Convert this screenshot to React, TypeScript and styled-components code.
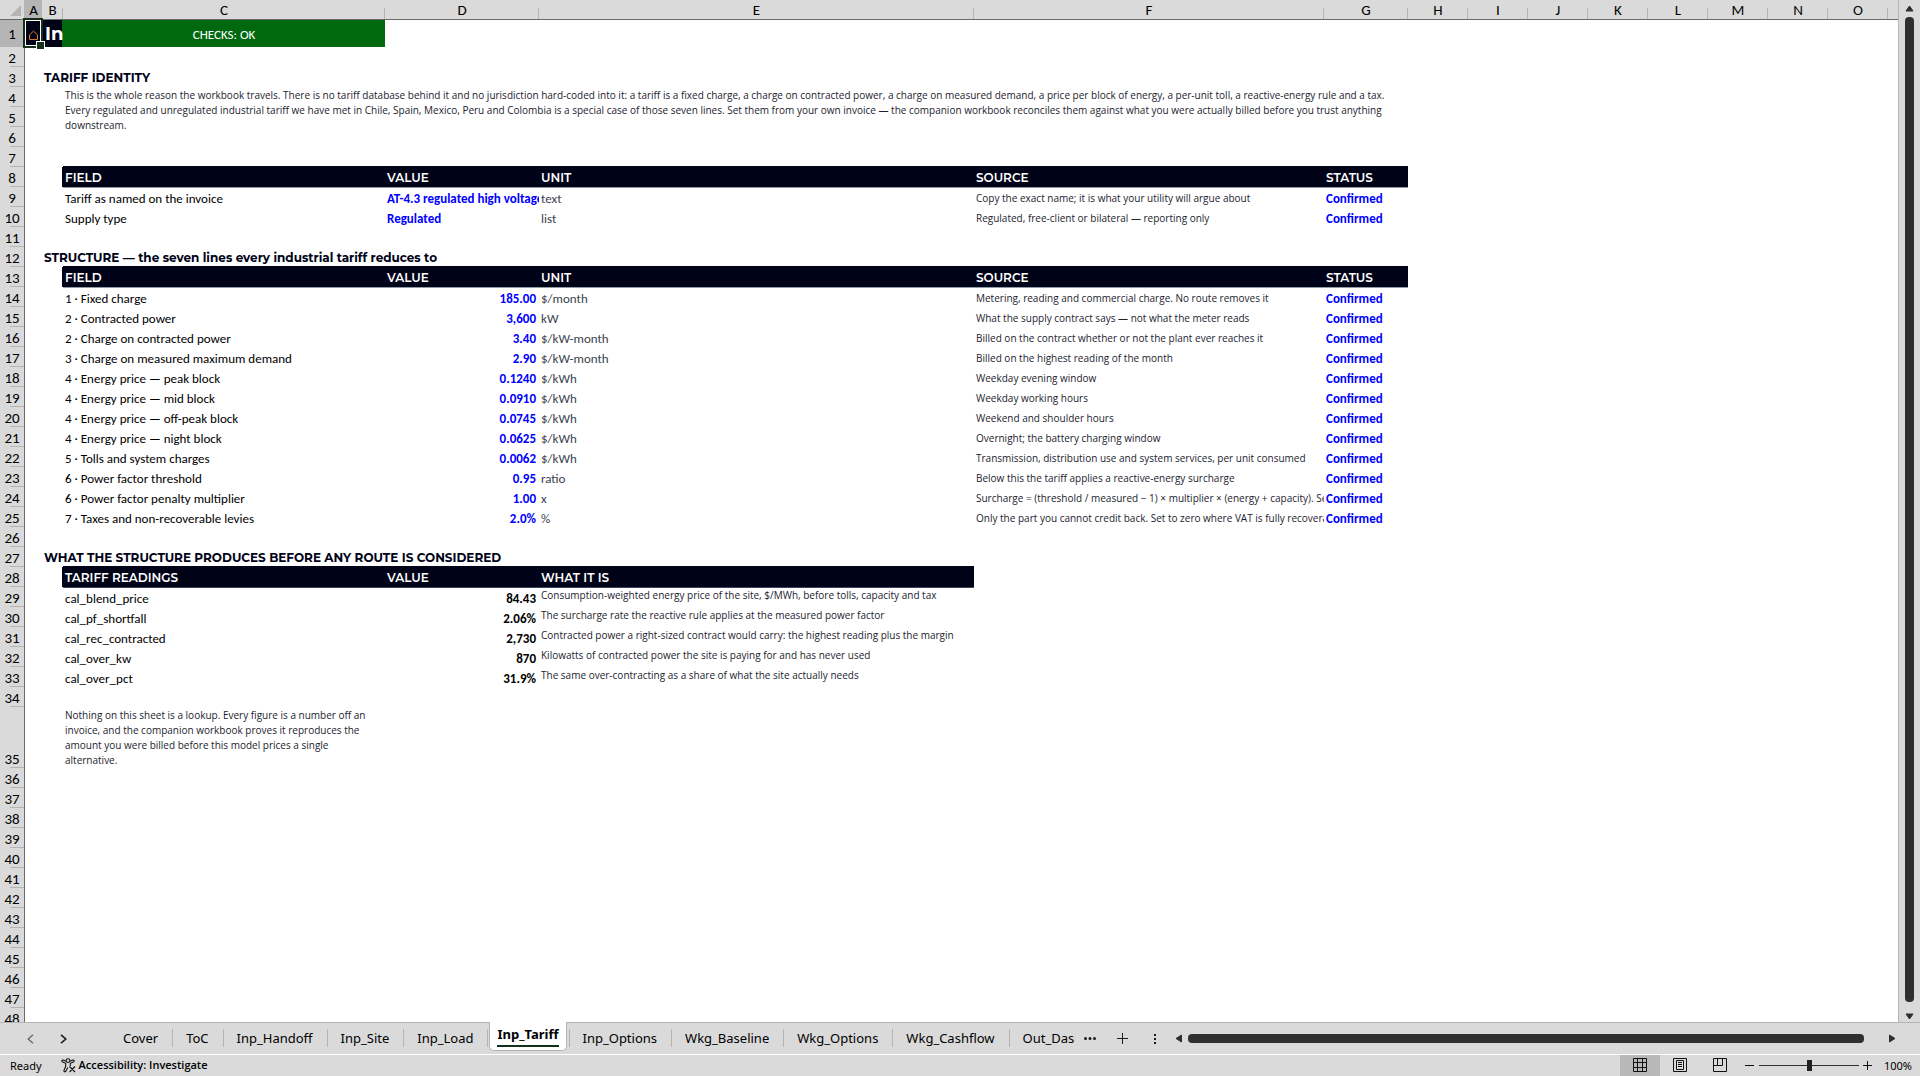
import React from "react";
import styled, { createGlobalStyle, css } from "styled-components";

const body = `Carlito, Calibri, Lato, sans-serif`;
const display = `Montserrat, Lato, sans-serif`;
const ui = `"Noto Sans", "Open Sans", sans-serif`;

const color = {
  chrome: "#dadada",
  chromeActive: "#b5b5b5",
  line: "#6b6b6b",
  tick: "#b4b4b4",
  navy: "#000217",
  green: "#00690f",
  input: "#0000ff",
  note: "#1c232e",
  ink: "#2f2f2f",
};

const GlobalStyle = createGlobalStyle`
  * { box-sizing: border-box; }
  body { margin: 0; background: ${color.chrome}; color: #000; font-family: ${body}; }
  button, input { font: inherit; color: inherit; border: 0; padding: 0; margin: 0; background: none; }
`;

const Workbook = styled.div`
  display: flex;
  flex-direction: column;
  height: 100vh;
  overflow: hidden;
`;

const Main = styled.main`
  display: flex;
  flex: 1;
  min-height: 0;
`;

const Sheet = styled.div`
  flex: 1;
  min-width: 0;
  overflow: hidden;
  background: #fff;
  border-right: 1px solid ${color.tick};
`;

const Grid = styled.table`
  width: 100%;
  table-layout: fixed;
  border-collapse: separate;
  border-spacing: 0;
`;

const Column = styled.col<{ $width?: number }>`
  ${(p) => p.$width && `width: ${p.$width}px;`}
`;

const ColumnHead = styled.th<{ $active?: boolean; $last?: boolean }>`
  height: 20px;
  padding: 2px 0 0;
  font-size: 15px;
  line-height: 17px;
  font-weight: 400;
  border-bottom: 1px solid ${color.line};
  background-color: ${(p) => (p.$active ? color.chromeActive : color.chrome)};
  ${(p) =>
    !p.$last &&
    css`
      background-image: linear-gradient(${color.tick}, ${color.tick});
      background-size: 1px 11px;
      background-position: right bottom;
      background-repeat: no-repeat;
    `}
`;

const Corner = styled.td`
  height: 20px;
  padding: 5px 3px 0 0;
  line-height: 0;
  text-align: right;
  vertical-align: top;
  background: ${color.chrome};
  border-right: 1px solid ${color.tick};
  border-bottom: 1px solid ${color.line};
`;

const Row = styled.tr<{ $height: number }>`
  height: ${(p) => p.$height}px;
`;

const RowHead = styled.th<{ $active?: boolean }>`
  padding: 0;
  font-size: 15px;
  line-height: 18px;
  font-weight: 400;
  text-align: center;
  vertical-align: ${(p) => (p.$active ? "middle" : "bottom")};
  border-right: 1px solid ${color.line};
  background-color: ${(p) => (p.$active ? color.chromeActive : color.chrome)};
  background-image: linear-gradient(${color.tick}, ${color.tick});
  background-size: 14px 1px;
  background-position: right bottom;
  background-repeat: no-repeat;
`;

type Kind = "unit" | "note" | "input" | "result" | "readLabel" | "readNote";

const kinds: Record<Kind, ReturnType<typeof css>> = {
  unit: css`
    color: #3b434d;
  `,
  note: css`
    font-family: "Open Sans", sans-serif;
    font-size: 10px;
    color: ${color.note};
  `,
  input: css`
    font-weight: 700;
    color: ${color.input};
  `,
  result: css`
    font-weight: 700;
    line-height: 16px;
  `,
  readLabel: css`
    line-height: 16px;
  `,
  readNote: css`
    padding-top: 1px;
    font-family: "Open Sans", sans-serif;
    font-size: 10px;
    line-height: 15px;
    vertical-align: top;
    color: ${color.note};
  `,
};

const Cell = styled.td<{ $kind?: Kind; $right?: boolean }>`
  padding: 0 3px 0 2px;
  font-size: 13px;
  line-height: 17px;
  white-space: nowrap;
  overflow: hidden;
  vertical-align: bottom;
  text-align: ${(p) => (p.$right ? "right" : "left")};
  ${(p) => p.$kind && kinds[p.$kind]}
`;

const FieldHead = styled.th<{ $rule: string }>`
  padding: 0 2px;
  font-family: ${display};
  font-size: 12px;
  line-height: 18px;
  font-weight: 600;
  text-align: left;
  vertical-align: bottom;
  white-space: nowrap;
  color: #fff;
  background: ${color.navy};
  box-shadow: 0 -1px 0 ${color.navy}, -1px 0 0 ${color.navy}, 0 1px 0 ${(p) => p.$rule};
`;

const SectionTitle = styled.th`
  padding: 0 2px;
  font-family: ${display};
  font-size: 12px;
  line-height: 18px;
  font-weight: 700;
  text-align: left;
  vertical-align: bottom;
  white-space: nowrap;
  color: ${color.navy};
`;

const HomeCell = styled.td`
  position: relative;
  padding: 0;
  text-align: center;
  vertical-align: middle;
  background: ${color.navy};
`;

const HomeLink = styled.a`
  display: flex;
  justify-content: center;
  padding-top: 3px;
`;

const Selection = styled.span`
  position: absolute;
  inset: -2px -1px -1px -2px;
  border: 2px solid #14301a;
  box-shadow: inset 0 0 0 1px #fff;
  pointer-events: none;
  &::after {
    content: "";
    position: absolute;
    right: -4px;
    bottom: -4px;
    width: 7px;
    height: 7px;
    background: #14301a;
    border: 1px solid #fff;
  }
`;

const TitleCell = styled.td`
  padding: 0 0 0 3px;
  font-family: ${display};
  font-size: 18px;
  line-height: 26px;
  font-weight: 700;
  white-space: nowrap;
  overflow: hidden;
  color: #fff;
  background: ${color.navy};
`;

const CheckCell = styled.td`
  padding: 3px 0 0;
  font-size: 13px;
  line-height: 18px;
  text-align: center;
  color: #fff;
  background: ${color.green};
  box-shadow: -1px 0 0 ${color.green};
`;

const ScrollColumn = styled.div`
  display: flex;
  flex-direction: column;
  align-items: center;
  gap: 5px;
  width: 21px;
  padding: 5px 0 2px;
  line-height: 0;
`;

const Thumb = styled.div<{ $vertical?: boolean }>`
  flex: 1;
  border-radius: 4px;
  background: ${color.ink};
  ${(p) => (p.$vertical ? "width: 9px; margin-bottom: 6px;" : "height: 9px; margin-right: 19px;")}
`;

const TabBar = styled.nav`
  display: flex;
  align-items: center;
  height: 32px;
  padding-left: 14px;
  border-top: 1px solid ${color.tick};
  font-family: ${ui};
  font-size: 13px;
`;

const IconButton = styled.button<{ $width: number }>`
  display: flex;
  flex: none;
  align-items: center;
  justify-content: center;
  width: ${(p) => p.$width}px;
  height: 24px;
`;

const TabList = styled.div`
  display: flex;
  flex: 0 1 965px;
  align-self: stretch;
  align-items: center;
  margin: -1px 0 0 30px;
  overflow: hidden;
`;

const Tab = styled.button`
  flex: none;
  height: 18px;
  padding: 0 14px 0 13px;
  line-height: 18px;
  border-right: 1px solid ${color.tick};
`;

const ActiveTab = styled.button`
  display: flex;
  flex: none;
  align-self: flex-start;
  height: 29px;
  margin: 0 2px 0 1px;
  padding: 3px 7px 0;
  background: #fff;
  border-radius: 0 0 5px 5px;
  border: 1px solid ${color.tick};
  border-top: 0;
`;

const ActiveLabel = styled.span`
  height: 22px;
  line-height: 19px;
  font-weight: 700;
  border-bottom: 2px solid #14301a;
`;

const AfterActive = styled.span`
  flex: none;
  width: 1px;
  height: 18px;
  background: ${color.tick};
`;

const ScrollRow = styled.div`
  display: flex;
  flex: 1;
  align-items: center;
  gap: 5px;
  padding: 0 24px 0 5px;
`;

const StatusBar = styled.footer`
  display: flex;
  align-items: center;
  height: 22px;
  padding: 0 8px 0 10px;
  border-top: 1px solid #fff;
  font-family: ${ui};
  font-size: 11px;
  line-height: 20px;
`;

const AccessButton = styled.button`
  display: flex;
  align-items: center;
  gap: 3px;
  margin-left: 19px;
  padding-bottom: 1px;
  font-family: "Open Sans", sans-serif;
  font-weight: 600;
`;

const Views = styled.div`
  display: flex;
  align-self: stretch;
  margin-left: auto;
`;

const ViewButton = styled.button<{ $on?: boolean }>`
  display: flex;
  align-items: center;
  justify-content: center;
  width: 40px;
  padding-bottom: 2px;
  background: ${(p) => (p.$on ? "#b8b8b8" : "transparent")};
`;

const ZoomSlider = styled.input`
  width: 100px;
  height: 12px;
  appearance: none;
  background: linear-gradient(${color.ink}, ${color.ink}) center / 100% 1px no-repeat;
  &::-webkit-slider-thumb {
    appearance: none;
    width: 5px;
    height: 11px;
    background: #222;
  }
`;

const ZoomValue = styled.span`
  width: 36px;
  text-align: right;
`;

const columns: [string, number][] = [
  ["A", 17], ["B", 21], ["C", 322], ["D", 154], ["E", 435], ["F", 350], ["G", 84],
  ["H", 60], ["I", 60], ["J", 60], ["K", 60], ["L", 60], ["M", 60], ["N", 60], ["O", 60],
];

const sections: Record<number, string> = {
  3: "TARIFF IDENTITY",
  12: "STRUCTURE — the seven lines every industrial tariff reduces to",
  27: "WHAT THE STRUCTURE PRODUCES BEFORE ANY ROUTE IS CONSIDERED",
};

const heads: Record<number, string[]> = {
  8: ["FIELD", "VALUE", "UNIT", "SOURCE", "STATUS"],
  13: ["FIELD", "VALUE", "UNIT", "SOURCE", "STATUS"],
  28: ["TARIFF READINGS", "VALUE", "WHAT IT IS"],
};

const fields: Record<number, [string, string, string, string]> = {
  9: ["Tariff as named on the invoice", "AT-4.3 regulated high voltage", "text", "Copy the exact name; it is what your utility will argue about"],
  10: ["Supply type", "Regulated", "list", "Regulated, free-client or bilateral — reporting only"],
  14: ["1 · Fixed charge", "185.00", "$/month", "Metering, reading and commercial charge. No route removes it"],
  15: ["2 · Contracted power", "3,600", "kW", "What the supply contract says — not what the meter reads"],
  16: ["2 · Charge on contracted power", "3.40", "$/kW-month", "Billed on the contract whether or not the plant ever reaches it"],
  17: ["3 · Charge on measured maximum demand", "2.90", "$/kW-month", "Billed on the highest reading of the month"],
  18: ["4 · Energy price — peak block", "0.1240", "$/kWh", "Weekday evening window"],
  19: ["4 · Energy price — mid block", "0.0910", "$/kWh", "Weekday working hours"],
  20: ["4 · Energy price — off-peak block", "0.0745", "$/kWh", "Weekend and shoulder hours"],
  21: ["4 · Energy price — night block", "0.0625", "$/kWh", "Overnight; the battery charging window"],
  22: ["5 · Tolls and system charges", "0.0062", "$/kWh", "Transmission, distribution use and system services, per unit consumed"],
  23: ["6 · Power factor threshold", "0.95", "ratio", "Below this the tariff applies a reactive-energy surcharge"],
  24: ["6 · Power factor penalty multiplier", "1.00", "x", "Surcharge = (threshold / measured − 1) × multiplier × (energy + capacity). Se"],
  25: ["7 · Taxes and non-recoverable levies", "2.0%", "%", "Only the part you cannot credit back. Set to zero where VAT is fully recovera"],
};

const readings: Record<number, [string, string, string]> = {
  29: ["cal_blend_price", "84.43", "Consumption-weighted energy price of the site, $/MWh, before tolls, capacity and tax"],
  30: ["cal_pf_shortfall", "2.06%", "The surcharge rate the reactive rule applies at the measured power factor"],
  31: ["cal_rec_contracted", "2,730", "Contracted power a right-sized contract would carry: the highest reading plus the margin"],
  32: ["cal_over_kw", "870", "Kilowatts of contracted power the site is paying for and has never used"],
  33: ["cal_over_pct", "31.9%", "The same over-contracting as a share of what the site actually needs"],
};

function RowCells({ n }: { n: number }) {
  if (n === 1)
    return (
      <>
        <HomeCell>
          <HomeLink href="#toc" aria-label="Home">
            <svg width="11" height="11" viewBox="0 0 11 11" fill="none" stroke="#d9732f">
              <path d="M1.5 9.5V4.8L5.5 1.2l4 3.6v4.7z" />
            </svg>
          </HomeLink>
          <Selection />
        </HomeCell>
        <TitleCell>In</TitleCell>
        <CheckCell>CHECKS: OK</CheckCell>
        <td colSpan={13} />
      </>
    );
  if (n === 4)
    return (
      <>
        <td colSpan={2} />
        <Cell $kind="readNote" colSpan={5} rowSpan={3}>
          This is the whole reason the workbook travels. There is no tariff database behind it and no jurisdiction
          hard-coded into it: a tariff is a fixed charge, a charge on contracted power, a charge on measured demand, a
          price per block of energy, a per-unit toll, a reactive-energy rule and a tax.
          <br />
          Every regulated and unregulated industrial tariff we have met in Chile, Spain, Mexico, Peru and Colombia is a
          special case of those seven lines. Set them from your own invoice — the companion workbook reconciles them
          against what you were actually billed before you trust anything
          <br />
          downstream.
        </Cell>
        <td colSpan={9} />
      </>
    );
  if (n === 5 || n === 6)
    return (
      <>
        <td colSpan={2} />
        <td colSpan={9} />
      </>
    );
  if (sections[n])
    return (
      <>
        <td />
        <SectionTitle colSpan={6}>{sections[n]}</SectionTitle>
        <td colSpan={9} />
      </>
    );
  if (heads[n])
    return (
      <>
        <td colSpan={2} />
        {heads[n].map((h) => (
          <FieldHead key={h} $rule={n === 28 ? "#3a4560" : "#8c9ca9"}>
            {h}
          </FieldHead>
        ))}
        <td colSpan={14 - heads[n].length} />
      </>
    );
  if (fields[n]) {
    const [label, value, unit, source] = fields[n];
    return (
      <>
        <td colSpan={2} />
        <Cell>{label}</Cell>
        <Cell $kind="input" $right={n > 10}>{value}</Cell>
        <Cell $kind="unit">{unit}</Cell>
        <Cell $kind="note">{source}</Cell>
        <Cell $kind="input">Confirmed</Cell>
        <td colSpan={9} />
      </>
    );
  }
  if (readings[n]) {
    const [label, value, note] = readings[n];
    return (
      <>
        <td colSpan={2} />
        <Cell $kind="readLabel">{label}</Cell>
        <Cell $kind="result" $right>{value}</Cell>
        <Cell $kind="readNote">{note}</Cell>
        <td colSpan={11} />
      </>
    );
  }
  if (n === 35)
    return (
      <>
        <td colSpan={2} />
        <Cell $kind="readNote">
          Nothing on this sheet is a lookup. Every figure is a number off an
          <br />
          invoice, and the companion workbook proves it reproduces the
          <br />
          amount you were billed before this model prices a single
          <br />
          alternative.
        </Cell>
        <td colSpan={13} />
      </>
    );
  return <td colSpan={16} />;
}

const rowHeight = (n: number) => (n === 1 ? 27 : n === 35 ? 60 : 20);

const Arrow = ({ d, w, h }: { d: string; w: number; h: number }) => (
  <svg width={w} height={h} viewBox={`0 0 ${w} ${h}`} fill={color.ink} stroke={color.ink} strokeLinejoin="round">
    <path d={d} />
  </svg>
);

export default function App() {
  return (
    <Workbook>
      <GlobalStyle />
      <Main>
        <Sheet>
          <Grid>
            <colgroup>
              <Column $width={25} />
              {columns.map(([name, width]) => (
                <Column key={name} $width={width} />
              ))}
              <Column />
            </colgroup>
            <thead>
              <tr>
                <Corner>
                  <svg width="11" height="11" viewBox="0 0 11 11">
                    <path d="M11 0v11H0z" fill={color.tick} />
                  </svg>
                </Corner>
                {columns.map(([name]) => (
                  <ColumnHead key={name} scope="col" $active={name === "A"}>
                    {name}
                  </ColumnHead>
                ))}
                <ColumnHead $last />
              </tr>
            </thead>
            <tbody>
              {Array.from({ length: 48 }, (_, i) => i + 1).map((n) => (
                <Row key={n} $height={rowHeight(n)}>
                  <RowHead scope="row" $active={n === 1}>
                    {n}
                  </RowHead>
                  <RowCells n={n} />
                </Row>
              ))}
            </tbody>
          </Grid>
        </Sheet>
        <ScrollColumn>
          <Arrow w={9} h={7} d="M4.5 1L8 6H1z" />
          <Thumb $vertical />
          <Arrow w={9} h={7} d="M4.5 6L8 1H1z" />
        </ScrollColumn>
      </Main>
      <TabBar>
        <IconButton $width={33} aria-label="Previous sheets">
          <svg width="7" height="10" viewBox="0 0 7 10" fill="none" stroke="#6a6a6a" strokeWidth="1.4">
            <path d="M6 .8L1.2 5 6 9.2" />
          </svg>
        </IconButton>
        <IconButton $width={33} aria-label="Next sheets">
          <svg width="7" height="10" viewBox="0 0 7 10" fill="none" stroke="#1c1c1c" strokeWidth="1.6">
            <path d="M1 .8L5.8 5 1 9.2" />
          </svg>
        </IconButton>
        <TabList>
          {["Cover", "ToC", "Inp_Handoff", "Inp_Site", "Inp_Load"].map((t) => (
            <Tab key={t}>{t}</Tab>
          ))}
          <ActiveTab aria-current="page">
            <ActiveLabel>Inp_Tariff</ActiveLabel>
          </ActiveTab>
          <AfterActive />
          {["Inp_Options", "Wkg_Baseline", "Wkg_Options", "Wkg_Cashflow", "Out_Dash"].map((t) => (
            <Tab key={t}>{t}</Tab>
          ))}
        </TabList>
        <IconButton $width={30} aria-label="More sheets">
          <svg width="12" height="3" viewBox="0 0 12 3" fill="#1c1c1c">
            <circle cx="1.5" cy="1.5" r="1.5" />
            <circle cx="6" cy="1.5" r="1.5" />
            <circle cx="10.5" cy="1.5" r="1.5" />
          </svg>
        </IconButton>
        <IconButton $width={34} aria-label="New sheet">
          <svg width="11" height="11" viewBox="0 0 11 11" stroke="#1c1c1c">
            <path d="M5.5 0v11M0 5.5h11" />
          </svg>
        </IconButton>
        <IconButton $width={31} aria-label="Resize tabs">
          <svg width="2" height="12" viewBox="0 0 2 12" fill="#1c1c1c">
            <path d="M0 1h2v2H0zM0 5h2v2H0zM0 9h2v2H0z" />
          </svg>
        </IconButton>
        <ScrollRow>
          <Arrow w={8} h={9} d="M1 4.5L6.500 1v7z" />
          <Thumb />
          <Arrow w={8} h={9} d="M7 4.5L1.500 1v7z" />
        </ScrollRow>
      </TabBar>
      <StatusBar>
        <span>Ready</span>
        <AccessButton>
          <svg width="15" height="15" viewBox="0 0 15 15" fill="none" stroke="#111" strokeWidth="1.1">
            <circle cx="7" cy="2.600" r="1.900" />
            <path d="M5 3.200L2.200 2.100C.7 1.700.3 3.500 1.600 4L4.700 5.300v3L3 12.400c-.4 1.500 1.400 2 2 .7L6.800 9.500M9 3.200l2.800-1.100c1.500-.4 1.900 1.400.6 1.900L9.300 5.300V8M8.500 8.500l5.500 5.500M14 8.500L8.500 14" />
          </svg>
          Accessibility: Investigate
        </AccessButton>
        <Views>
          <ViewButton $on aria-label="Normal view">
            <svg width="14" height="14" viewBox="0 0 14 14" fill="none" stroke="#111">
              <path d="M.5.5h13v13H.5zM4.500.5v13M9.500.5v13M.5 4.500h13M.5 9.500h13" />
            </svg>
          </ViewButton>
          <ViewButton aria-label="Page layout view">
            <svg width="14" height="14" viewBox="0 0 14 14" fill="none" stroke="#111">
              <path d="M.5.5h13v13H.5zM3.500 2.500h7v9h-7zM5 4.500h4M5 6.500h4M5 8.500h4" />
            </svg>
          </ViewButton>
          <ViewButton aria-label="Page break view">
            <svg width="14" height="14" viewBox="0 0 14 14" fill="none" stroke="#111">
              <path d="M.5.5h13v13H.5zM4.500.5v7M9.500.5v7M.5 7.500h9" />
            </svg>
          </ViewButton>
        </Views>
        <IconButton $width={19} aria-label="Zoom out">
          <svg width="9" height="9" viewBox="0 0 9 9" stroke="#111">
            <path d="M0 4.500h9" />
          </svg>
        </IconButton>
        <ZoomSlider type="range" min="0" max="200" defaultValue="100" aria-label="Zoom" />
        <IconButton $width={17} aria-label="Zoom in">
          <svg width="9" height="9" viewBox="0 0 9 9" stroke="#111">
            <path d="M0 4.500h9M4.500 0v9" />
          </svg>
        </IconButton>
        <ZoomValue>100%</ZoomValue>
      </StatusBar>
    </Workbook>
  );
}
